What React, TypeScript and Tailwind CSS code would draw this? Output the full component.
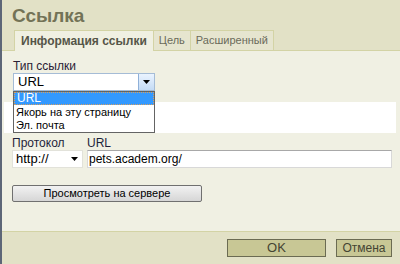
import React from 'react';

const font = { fontFamily: '"Liberation Sans", Arial, sans-serif' };

function Tab({ label, active }: { label: string; active?: boolean }) {
  return (
    <div
      className={
        active
          ? 'h-[21px] px-[6px] flex items-center bg-[#f0f0e2] border border-b-0 border-[#d3d3a5] text-[12px] font-bold text-[#555548] -mb-px relative z-10'
          : 'h-[20px] px-[5px] flex items-center bg-[#e6e5cf] border border-b-0 border-l-0 border-[#d3d3a5] text-[11px] text-[#6a6a5a]'
      }
    >
      {label}
    </div>
  );
}

export default function App() {
  return (
    <div className="w-[400px] h-[264px] flex bg-[#e2e1c6] overflow-hidden" style={font}>
      <div className="w-[2px] bg-[#5d6677]" />
      <div className="flex-1 flex flex-col">
        <div className="h-[50px] flex flex-col justify-between">
          <h1 className="pl-[10px] pt-[4px] text-[19px] leading-[23px] font-bold text-[#737357]">Ссылка</h1>
          <div className="flex items-end pl-[12px]">
            <Tab label="Информация ссылки" active />
            <Tab label="Цель" />
            <Tab label="Расширенный" />
          </div>
        </div>

        <div className="h-[181px] bg-[#f0f0e3] border-t border-[#d3d3a5] relative">
          <div className="pl-[11px] pt-[8px] text-[12px] leading-[14px] text-[#2b2135]">Тип ссылки</div>
          <div className="ml-[11px] w-[142px] h-[18px] flex bg-white border border-[#a5bcd6]">
            <div className="flex-1 pl-[4px] text-[13px] leading-[16px] text-black">URL</div>
            <div className="w-[16px] h-full flex items-center justify-center bg-gradient-to-b from-[#eaf3ff] to-[#c4dbf5] border-l border-[#8fb0d8]">
              <svg width="7" height="4" viewBox="0 0 7 4"><path d="M0 0h7L3.5 4z" fill="#000" /></svg>
            </div>
          </div>
          <div className="ml-[2px] mr-[4px] mt-[11px] h-[31px] bg-white" />

          <div className="flex gap-[4px] pl-[10px] pt-[4px]">
            <div className="w-[71px] shrink-0">
              <div className="text-[12px] leading-[13px] text-[#1f1f3a]">Протокол</div>
              <div className="h-[18px] flex items-center justify-between bg-white border border-[#e2e2da] pl-[3px] pr-[4px]">
                <span className="text-[13px] text-black">http://</span>
                <svg width="7" height="4" viewBox="0 0 7 4"><path d="M0 0h7L3.5 4z" fill="#000" /></svg>
              </div>
            </div>
            <div className="flex-1 mr-[8px]">
              <div className="text-[12px] leading-[13px] text-[#1f1f3a]">URL</div>
              <div className="h-[18px] flex items-center bg-white border border-[#d8d8d8] border-t-[#a8a8a8] pl-[1px]">
                <span className="text-[12px] text-black">pets.academ.org/</span>
              </div>
            </div>
          </div>

          <div className="ml-[10px] mt-[17px] w-[190px] h-[17px] flex items-center justify-center rounded-[2px] border border-[#707070] bg-gradient-to-b from-[#f2f2f2] to-[#d6d6d6] text-[11px] text-black">
            Просмотреть на сервере
          </div>

          <div className="absolute left-[11px] top-[40px] w-[142px] h-[42px] bg-white border border-[#646464] text-[11px] leading-[13px] text-black">
            <div className="h-[13px] bg-[#3399ff] text-white pl-[2px] border border-dotted border-[#d8a060] leading-[11px] text-[12px]">URL</div>
            <div className="h-[14px] pl-[2px] leading-[14px]">Якорь на эту страницу</div>
            <div className="h-[13px] pl-[2px] leading-[13px]">Эл. почта</div>
          </div>
        </div>

        <div className="flex-1 border-t border-[#d3d3a5] flex items-start justify-end gap-[10px] pt-[7px] pr-[8px]">
          <div className="w-[99px] h-[18px] flex items-center justify-center bg-[#c8c795] border border-[#6b6b52] text-[13px] text-[#444433]">OK</div>
          <div className="w-[56px] h-[18px] flex items-center justify-center bg-[#c8c795] border border-[#6b6b52] text-[12px] text-[#444433]">Отмена</div>
        </div>
      </div>
    </div>
  );
}
